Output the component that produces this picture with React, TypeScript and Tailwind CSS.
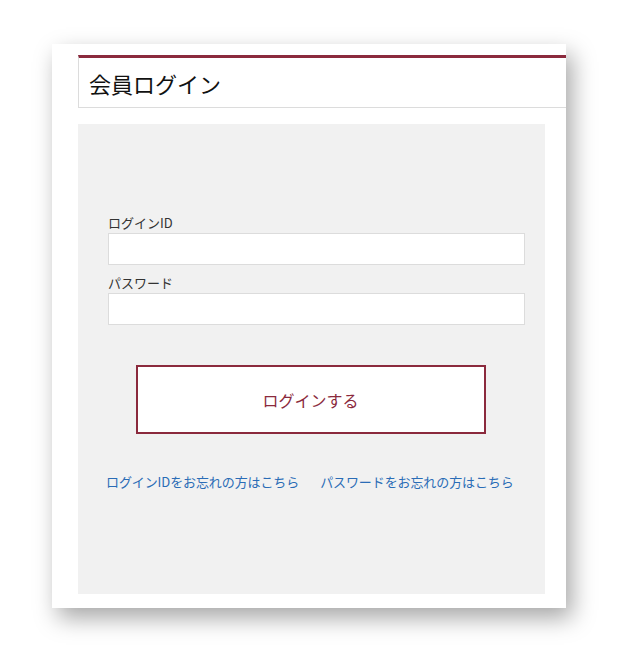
export default function App() {
  return (
    <div
      className="min-h-[653px] w-[617px] bg-white pt-[44px] pl-[52px]"
      style={{ fontFamily: '"Noto Sans CJK JP", "Noto Sans", sans-serif' }}
    >
      <div className="w-[514px] h-[564px] bg-white shadow-[6px_10px_22px_rgba(0,0,0,0.35)] pl-[26px] pt-[11px]">
        {/* Header */}
        <div className="h-[53px] border-t-[3px] border-t-[#8b2a3d] border-l border-b border-[#dcdcdc] flex items-center pl-[10px]">
          <h1 className="text-[22px] text-[#111] leading-none">会員ログイン</h1>
        </div>

        {/* Panel */}
        <div className="mt-[16px] w-[467px] h-[470px] bg-[#f1f1f1] pt-[90px] pl-[30px] pr-[20px]">
          <label className="block text-[13px] text-[#333] leading-[17px]">ログインID</label>
          <input type="text" className="block w-full h-[32px] mt-[2px] bg-white border border-[#dcdcdc]" />
          <label className="block mt-[9px] text-[13px] text-[#333] leading-[17px]">パスワード</label>
          <input type="password" className="block w-full h-[32px] mt-[2px] bg-white border border-[#dcdcdc]" />

          <div className="mt-[40px] flex justify-center pr-[12px]">
            <button className="w-[350px] h-[69px] bg-white border-2 border-[#8b2a3d] text-[#8b2a3d] text-[16px]">
              ログインする
            </button>
          </div>

          <div className="mt-[38px] -ml-[2px] flex gap-[21px] text-[13px] tracking-[-0.1px] text-[#2a6cb6]">
            <a href="#">ログインIDをお忘れの方はこちら</a>
            <a href="#">パスワードをお忘れの方はこちら</a>
          </div>
        </div>
      </div>
    </div>
  );
}
